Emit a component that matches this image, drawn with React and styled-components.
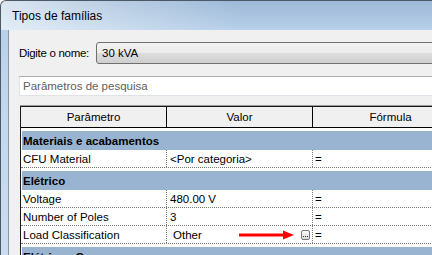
import React from 'react';
import styled, { createGlobalStyle } from 'styled-components';

const GlobalStyle = createGlobalStyle`
    html, body {
        margin: 0;
        padding: 0;
        width: 432px;
        height: 255px;
        overflow: hidden;
        background: #ffffff;
    }
    body {
        font-family: "Liberation Sans", Arial, sans-serif;
        font-size: 11.5px;
        color: #000;
    }
`;

const Janela = styled.div`
    width: 431px;
    height: 254px;
    display: flex;
    flex-direction: column;
    border-top: 1px solid #4b5868;
    border-left: 1px solid #4b5868;
    border-top-left-radius: 6px;
    background: linear-gradient(to bottom, #9db9d7 0, #b8d0e9 29px, #c4d9ee 120px, #c9dcf0 100%);
    overflow: hidden;
`;

const BarraTitulo = styled.div`
    height: 29px;
    flex-shrink: 0;
    display: flex;
    align-items: center;
    padding-left: 11px;
    font-size: 12px;
    color: #000;
    background: linear-gradient(to right, rgba(255,255,255,0.62) 0, rgba(255,255,255,0.3) 25%, rgba(255,255,255,0) 55%);
`;

const Conteudo = styled.div`
    flex: 1;
    min-width: 0;
    margin-left: 7px;
    border-left: 1px solid #8496ab;
    background: #f0f0f0;
    padding: 12px 0 0 10px;
    overflow: hidden;
`;

const LinhaNome = styled.div`
    display: flex;
    align-items: center;
    height: 22px;
`;

const Rotulo = styled.span`
    width: 77px;
    flex-shrink: 0;
    letter-spacing: -0.3px;
`;

const Combo = styled.div`
    width: 360px;
    flex-shrink: 0;
    height: 20px;
    display: flex;
    align-items: center;
    padding-left: 5px;
    border: 1px solid #707070;
    border-radius: 3px;
    background: linear-gradient(to bottom, #f2f2f2 0, #ebebeb 48%, #dddddd 52%, #cfcfcf 100%);
`;

const Pesquisa = styled.div`
    margin-top: 12px;
    width: 420px;
    height: 18px;
    display: flex;
    align-items: center;
    padding-left: 3px;
    border: 1px solid #dfe3e8;
    border-top-color: #abadb3;
    background: #fff;
    color: #5e5e5e;
`;

const Tabela = styled.div`
    margin: 10px 0 0 1px;
    width: 460px;
    border-top: 1px solid #1a1a1a;
    border-left: 1px solid #1a1a1a;
    box-shadow: 0 -1px 0 #9a9a9a;
    background: #fff;
`;

const Colunas = styled.div`
    display: grid;
    grid-template-columns: 145px 146px 169px;
`;

const Cabecalho = styled(Colunas)`
    height: 20px;
    background: #f0f0f0;
    border-bottom: 1px solid #000;
`;

const CelulaCabecalho = styled.div`
    display: flex;
    align-items: center;
    justify-content: center;
    padding-right: ${p => p.$wide ? '13px' : '0'};
    & + & {
        border-left: 1px solid #000;
    }
`;

const Grupo = styled.div`
    padding-top: 3px;
`;

const Faixa = styled.div`
    height: 19px;
    margin-left: 1px;
    display: flex;
    align-items: center;
    padding-left: 1px;
    background: #99b4d1;
    font-weight: bold;
`;

const Linha = styled(Colunas)`
    height: 17px;
    border-bottom: 1px dotted #777;
`;

const Celula = styled.div`
    position: relative;
    display: flex;
    align-items: center;
    padding-left: ${p => p.$pad || 2}px;
    white-space: nowrap;
    & + & {
        border-left: 1px dotted #777;
    }
`;

const Valor = styled.span`
    flex: 1;
`;

const BotaoReticencias = styled.div`
    width: 9px;
    height: 10px;
    margin-right: 2px;
    display: flex;
    align-items: flex-end;
    justify-content: center;
    gap: 1px;
    padding-bottom: 2px;
    box-sizing: border-box;
    border: 1px solid #7a7a7a;
    border-radius: 2px;
    background: linear-gradient(to bottom, #fafafa, #dadada);
`;

const Ponto = styled.span`
    width: 1px;
    height: 1px;
    background: #333;
`;

const Seta = styled.svg`
    position: absolute;
    left: 72px;
    top: 3px;
`;

const grupos = [
    {
        nome: 'Materiais e acabamentos',
        linhas: [{ parametro: 'CFU Material', valor: '<Por categoria>' }],
    },
    {
        nome: 'Elétrico',
        linhas: [
            { parametro: 'Voltage', valor: '480.00 V' },
            { parametro: 'Number of Poles', valor: '3' },
            { parametro: 'Load Classification', valor: 'Other', editando: true },
        ],
    },
    {
        nome: 'Elétrico - Cargas',
        linhas: [],
    },
];

const App = () => {
    return (
        <>
            <GlobalStyle />
            <Janela>
                <BarraTitulo>Tipos de famílias</BarraTitulo>
                <Conteudo>
                    <LinhaNome>
                        <Rotulo>Digite o nome:</Rotulo>
                        <Combo>30 kVA</Combo>
                    </LinhaNome>
                    <Pesquisa>Parâmetros de pesquisa</Pesquisa>

                    <Tabela>
                        <Cabecalho>
                            <CelulaCabecalho>Parâmetro</CelulaCabecalho>
                            <CelulaCabecalho>Valor</CelulaCabecalho>
                            <CelulaCabecalho $wide>Fórmula</CelulaCabecalho>
                        </Cabecalho>

                        {grupos.map(g => (
                            <Grupo key={g.nome}>
                                <Faixa>{g.nome}</Faixa>
                                {g.linhas.map(l => (
                                    <Linha key={l.parametro}>
                                        <Celula>{l.parametro}</Celula>
                                        <Celula $pad={l.editando ? 6 : 3}>
                                            <Valor>{l.valor}</Valor>
                                            {l.editando && (
                                                <>
                                                    <Seta width="56" height="12" viewBox="0 0 56 12">
                                                        <line x1="0" y1="6" x2="46" y2="6" stroke="#ff0000" strokeWidth="3" />
                                                        <polygon points="44,1.5 55,6 44,10.5" fill="#ff0000" />
                                                    </Seta>
                                                    <BotaoReticencias>
                                                        <Ponto /><Ponto /><Ponto />
                                                    </BotaoReticencias>
                                                </>
                                            )}
                                        </Celula>
                                        <Celula $pad={2}>=</Celula>
                                    </Linha>
                                ))}
                            </Grupo>
                        ))}
                    </Tabela>
                </Conteudo>
            </Janela>
        </>
    );
};

export default App;
